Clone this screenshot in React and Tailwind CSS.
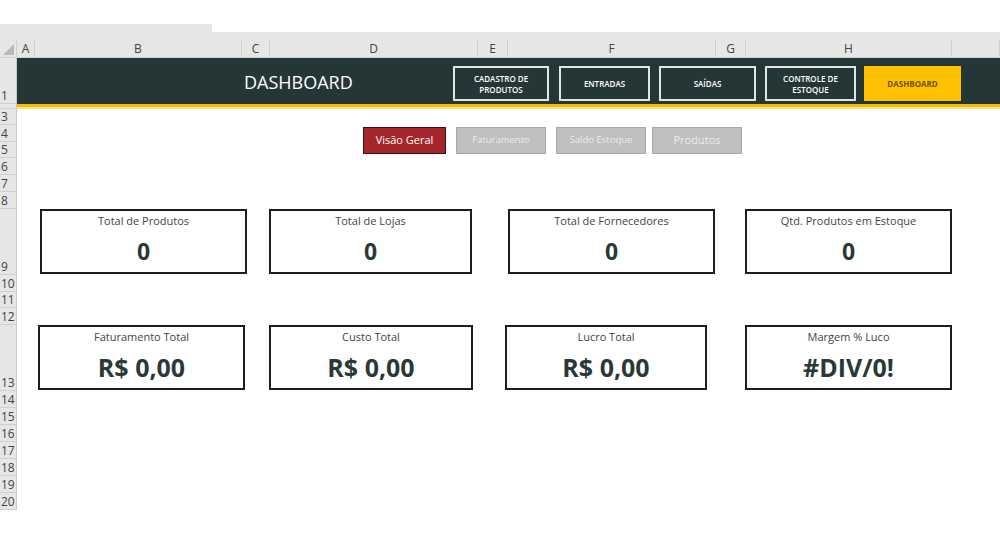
import React from "react";

const cols = [
  { l: "A", w: 18 },
  { l: "B", w: 207 },
  { l: "C", w: 28 },
  { l: "D", w: 208 },
  { l: "E", w: 30 },
  { l: "F", w: 208 },
  { l: "G", w: 30 },
  { l: "H", w: 206 },
  { l: "", w: 48 },
];

const rows = [
  { n: "1", h: 46 },
  { n: "", h: 5 },
  { n: "3", h: 16 },
  { n: "4", h: 17 },
  { n: "5", h: 16 },
  { n: "6", h: 17 },
  { n: "7", h: 17 },
  { n: "8", h: 17 },
  { n: "9", h: 66 },
  { n: "10", h: 17 },
  { n: "11", h: 16 },
  { n: "12", h: 17 },
  { n: "13", h: 66 },
  { n: "14", h: 17 },
  { n: "15", h: 17 },
  { n: "16", h: 17 },
  { n: "17", h: 17 },
  { n: "18", h: 17 },
  { n: "19", h: 17 },
  { n: "20", h: 17 },
];

function NavBtn({ children, w, ml }) {
  return (
    <div
      className="h-[35px] border-2 border-[#dfe6e6] flex items-center justify-center text-center text-white text-[8px] font-semibold leading-[11px] shrink-0"
      style={{ width: w, marginLeft: ml }}
    >
      {children}
    </div>
  );
}

function Card({ title, value, w, ml, big }) {
  return (
    <div
      className="h-[65px] border-2 border-[#1e1e1e] bg-white flex flex-col items-center shrink-0"
      style={{ width: w, marginLeft: ml }}
    >
      <div className="mt-[2px] text-[11px] leading-[16px] text-[#444]">{title}</div>
      <div
        className={
          big
            ? "mt-[7px] text-[25px] leading-[30px] font-bold text-[#2a3838]"
            : "mt-[7px] text-[23px] leading-[30px] font-bold text-[#2a3838]"
        }
      >
        {value}
      </div>
    </div>
  );
}

export default function App() {
  return (
    <div
      className="w-[1000px] h-[537px] bg-white overflow-hidden relative"
      style={{ fontFamily: '"Open Sans", "Noto Sans", sans-serif' }}
    >
      {/* top white */}
      <div className="h-[24px]" />
      {/* tab strip */}
      <div className="h-[8px] flex">
        <div className="w-[212px] bg-[#e6e6e6]" />
        <div className="flex-1 bg-white" />
      </div>
      {/* formula area + column headers */}
      <div className="h-[8px] bg-[#e6e6e6]" />
      <div className="h-[18px] bg-[#e6e6e6] flex border-b border-[#cfcfcf]">
        <div className="w-[17px] shrink-0 flex items-end justify-end pr-[2px] pb-[2px] border-r border-[#cfcfcf]">
          <svg width="11" height="11" viewBox="0 0 11 11">
            <polygon points="11,0 11,11 0,11" fill="#b8b8b8" />
          </svg>
        </div>
        {cols.map((c, i) => (
          <div
            key={i}
            className="shrink-0 flex items-center justify-center text-[12px] text-[#444] border-r border-[#cfcfcf]"
            style={{ width: c.w }}
          >
            {c.l}
          </div>
        ))}
      </div>

      <div className="flex">
        {/* row headers */}
        <div className="w-[17px] shrink-0 bg-[#e6e6e6] border-r border-[#c8c8c8]">
          {rows.map((r, i) => (
            <div
              key={i}
              className="flex items-end pl-[1px] text-[12px] leading-[15px] text-[#444] border-b border-[#d0d0d0] overflow-hidden"
              style={{ height: r.h }}
            >
              {r.n}
            </div>
          ))}
        </div>

        {/* sheet content */}
        <div className="flex-1">
          {/* header band */}
          <div className="h-[46px] bg-[#253636] flex items-start">
            <div className="ml-[227px] mt-[12px] text-[18px] leading-[24px] text-white w-[160px] shrink-0">
              DASHBOARD
            </div>
            <div className="flex mt-[8px]">
              <NavBtn w={96} ml={49}>
                CADASTRO DE
                <br />
                PRODUTOS
              </NavBtn>
              <NavBtn w={91} ml={10}>ENTRADAS</NavBtn>
              <NavBtn w={97} ml={9}>SAÍDAS</NavBtn>
              <NavBtn w={91} ml={9}>
                CONTROLE DE
                <br />
                ESTOQUE
              </NavBtn>
              <div className="w-[97px] h-[35px] ml-[8px] bg-[#ffc000] flex items-center justify-center text-[8px] font-bold text-[#6e5200] shrink-0">
                DASHBOARD
              </div>
            </div>
          </div>
          {/* yellow line */}
          <div className="h-[3px] bg-[#f4bf00]" />
          <div className="h-[2px] bg-[#fde58a]" />

          {/* tabs */}
          <div className="flex mt-[18px] h-[27px]">
            <div className="ml-[346px] w-[83px] bg-[#a4262b] border border-[#3a1010] flex items-center justify-center text-white text-[11px] shrink-0">
              Visão Geral
            </div>
            <div className="ml-[10px] w-[90px] bg-[#bfbfbf] border border-[#a9a9a9] flex items-center justify-center text-[#ececec] text-[9.5px] shrink-0">
              Faturamento
            </div>
            <div className="ml-[10px] w-[90px] bg-[#bfbfbf] border border-[#a9a9a9] flex items-center justify-center text-[#ececec] text-[9.5px] shrink-0">
              Saldo Estoque
            </div>
            <div className="ml-[6px] w-[90px] bg-[#bfbfbf] border border-[#a9a9a9] flex items-center justify-center text-[#ececec] text-[11px] shrink-0">
              Produtos
            </div>
          </div>

          {/* cards row 1 */}
          <div className="flex mt-[55px]">
            <Card title="Total de Produtos" value="0" w={207} ml={23} />
            <Card title="Total de Lojas" value="0" w={203} ml={22} />
            <Card title="Total de Fornecedores" value="0" w={207} ml={36} />
            <Card title="Qtd. Produtos em Estoque" value="0" w={207} ml={30} />
          </div>

          {/* cards row 2 */}
          <div className="flex mt-[51px]">
            <Card title="Faturamento Total" value="R$ 0,00" w={207} ml={21} big />
            <Card title="Custo Total" value="R$ 0,00" w={204} ml={24} big />
            <Card title="Lucro Total" value="R$ 0,00" w={202} ml={32} big />
            <Card title="Margem % Luco" value="#DIV/0!" w={207} ml={38} big />
          </div>
        </div>
      </div>
    </div>
  );
}
